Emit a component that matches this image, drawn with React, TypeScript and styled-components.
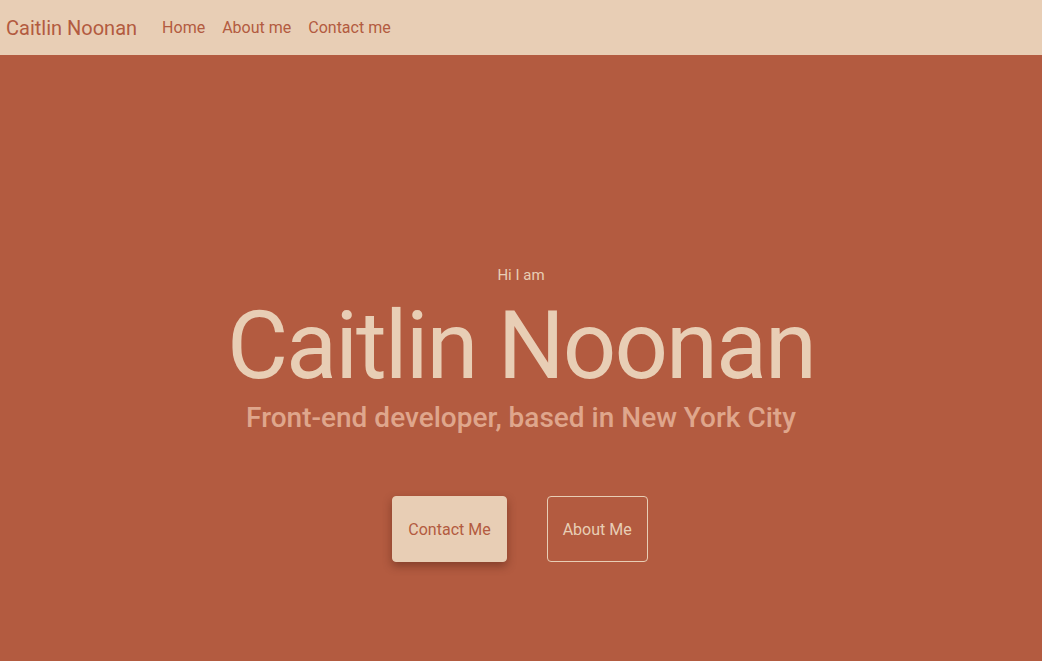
import React from "react";
import styled, { createGlobalStyle } from "styled-components";

const Global = createGlobalStyle`
  html, body { margin: 0; padding: 0; }
  body { font-family: Roboto, "Noto Sans", sans-serif; background: #b35b40; }
`;

const Page = styled.div`
  width: 1042px;
  height: 661px;
  display: flex;
  flex-direction: column;
  background: #b35b40;
  overflow: hidden;
`;

const NavBar = styled.nav`
  height: 55px;
  flex: 0 0 55px;
  background: #e8ceb5;
  display: flex;
  align-items: center;
  padding: 0 6px;
  box-sizing: border-box;
`;

const Brand = styled.a`
  font-size: 20px;
  color: #b35b40;
  margin-right: 25px;
  text-decoration: none;
`;

const NavLink = styled.a`
  font-size: 16px;
  color: #b35b40;
  margin-right: 17px;
  text-decoration: none;
`;

const Hero = styled.main`
  flex: 1;
  display: flex;
  flex-direction: column;
  align-items: center;
  padding-top: 209px;
`;

const Greeting = styled.p`
  margin: 0;
  font-size: 15px;
  color: #e8ceb5;
  line-height: 22px;
`;

const Title = styled.h1`
  margin: 6px 0 0;
  font-size: 94px;
  font-weight: 400;
  color: #e8ceb5;
  line-height: 108px;
  letter-spacing: -2px;
`;

const Subtitle = styled.h2`
  margin: 0;
  font-size: 28px;
  font-weight: 500;
  color: #dfa68c;
  line-height: 36px;
`;

const Actions = styled.div`
  display: flex;
  gap: 40px;
  margin-top: 60px;
  margin-left: -2px;
`;

const Button = styled.a<{ $filled?: boolean }>`
  height: 66px;
  box-sizing: border-box;
  display: flex;
  align-items: center;
  justify-content: center;
  padding: 0 15px;
  font-size: 16px;
  border-radius: 4px;
  text-decoration: none;
  color: ${(p) => (p.$filled ? "#b35b40" : "#e8ceb5")};
  background: ${(p) => (p.$filled ? "#e8ceb5" : "transparent")};
  border: 1px solid #e8ceb5;
  box-shadow: ${(p) => (p.$filled ? "0 4px 10px rgba(60, 20, 10, 0.4)" : "none")};
`;

export default function App() {
  return (
    <>
      <Global />
      <Page>
        <NavBar>
          <Brand>Caitlin Noonan</Brand>
          <NavLink>Home</NavLink>
          <NavLink>About me</NavLink>
          <NavLink>Contact me</NavLink>
        </NavBar>
        <Hero>
          <Greeting>Hi I am</Greeting>
          <Title>Caitlin Noonan</Title>
          <Subtitle>Front-end developer, based in New York City</Subtitle>
          <Actions>
            <Button $filled>Contact Me</Button>
            <Button>About Me</Button>
          </Actions>
        </Hero>
      </Page>
    </>
  );
}
